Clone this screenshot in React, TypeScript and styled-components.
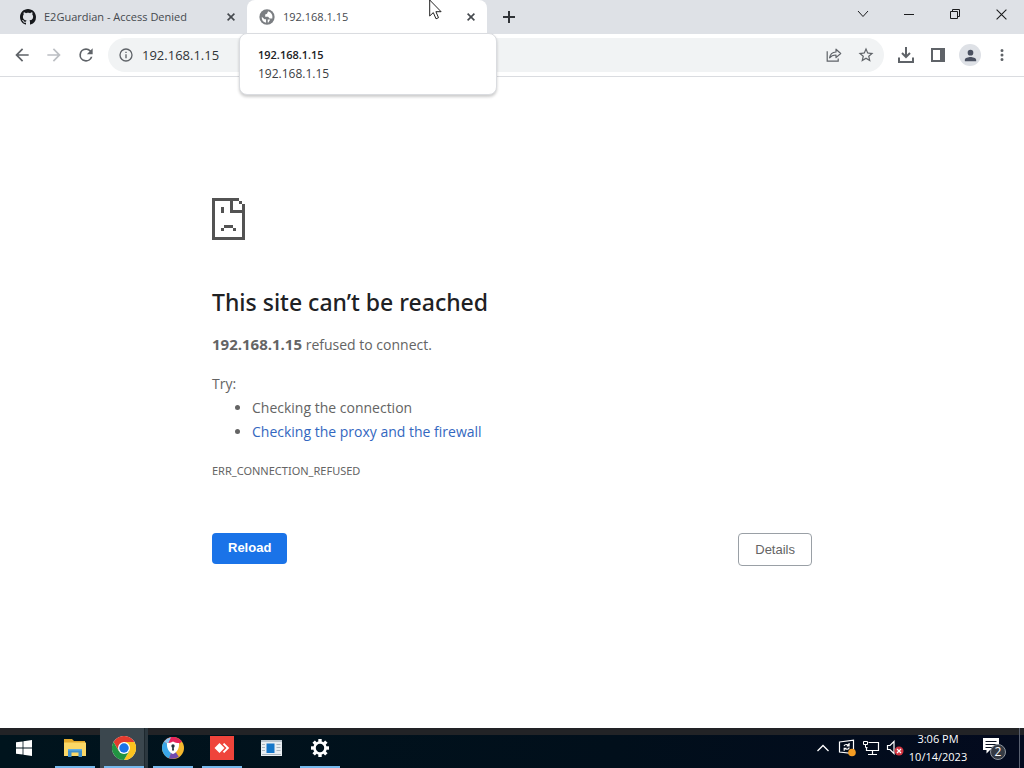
import React from 'react';
import styled, { createGlobalStyle } from 'styled-components';

const GlobalStyle = createGlobalStyle`
  * { box-sizing: border-box; }
  html, body, #root { height: 100%; }
  body {
    margin: 0;
    background: #fff;
    font-family: "Open Sans", "Noto Sans", sans-serif;
    color: #5f6368;
  }
  button, input { font: inherit; color: inherit; }
  svg { display: block; flex: none; }
`;

const Desktop = styled.div`
  display: flex;
  flex-direction: column;
  min-height: 100vh;
`;

/* ---------- tab strip ---------- */

const TabStrip = styled.header`
  display: flex;
  height: 34px;
  background: #dee1e6;
`;

const Tab = styled.div<{ $active?: boolean }>`
  position: relative;
  display: flex;
  align-items: center;
  width: ${p => (p.$active ? 240 : 247)}px;
  padding: 0 8px 0 ${p => (p.$active ? 12 : 20)}px;
  border-radius: 8px 8px 0 0;
  background: ${p => (p.$active ? '#fff' : 'transparent')};
`;

const TabLabel = styled.button`
  display: flex;
  flex: 1;
  align-items: center;
  gap: 8px;
  min-width: 0;
  padding: 0;
  border: 0;
  background: none;
  color: #45494e;
  font-size: 11px;
  line-height: 16px;
  white-space: nowrap;
`;

const IconButton = styled.button<{ $size?: number; $tone?: string }>`
  display: flex;
  flex: none;
  align-items: center;
  justify-content: center;
  width: ${p => p.$size ?? 32}px;
  height: ${p => p.$size ?? 32}px;
  padding: 0;
  border: 0;
  border-radius: 50%;
  background: none;
  color: ${p => p.$tone ?? '#5f6368'};
`;

const NewTab = styled.div`
  display: flex;
  align-items: center;
  padding-left: 8px;
`;

const WindowControls = styled.div`
  display: flex;
  margin-left: auto;
`;

const WindowButton = styled.button`
  display: flex;
  align-items: center;
  justify-content: center;
  width: 46px;
  height: 28px;
  padding: 0;
  border: 0;
  background: none;
  color: #1b1c1e;
`;

const HoverCard = styled.div`
  position: absolute;
  z-index: 2;
  top: 33px;
  left: -8px;
  width: 258px;
  padding: 12px 18px 10px;
  border: 1px solid #dadce0;
  border-radius: 8px;
  background: #fff;
  box-shadow: 0 2px 3px rgba(0, 0, 0, 0.2);
  color: #3c4043;
  font-size: 12px;
  line-height: 20px;
`;

const HoverTitle = styled.strong`
  display: block;
  color: #202124;
  font-size: 11px;
  font-weight: 600;
  line-height: 18px;
`;

const Cursor = styled.svg`
  position: absolute;
  z-index: 3;
  top: 0;
  left: 182px;
`;

/* ---------- toolbar ---------- */

const Toolbar = styled.nav`
  display: flex;
  align-items: center;
  height: 43px;
  padding: 0 6px;
  border-bottom: 1px solid #dadce0;
  background: #fff;
`;

const AddressBar = styled.label`
  display: flex;
  flex: 1;
  align-items: center;
  min-width: 0;
  height: 34px;
  margin: 0 6px;
  padding: 0 2px 0 10px;
  border-radius: 17px;
  background: #f1f3f4;
`;

const AddressInput = styled.input`
  flex: 1;
  min-width: 0;
  padding: 0 0 0 8px;
  border: 0;
  outline: 0;
  background: none;
  color: #303337;
  font-size: 13px;
  line-height: 20px;
`;

const Avatar = styled.span`
  display: flex;
  align-items: center;
  justify-content: center;
  width: 22px;
  height: 22px;
  border-radius: 50%;
  background: #dee1e6;
  color: #4a5060;
`;

/* ---------- error page ---------- */

const Page = styled.main`
  flex: 1;
  padding: 121px 24px 48px;
`;

const ErrorBox = styled.section`
  max-width: 600px;
  margin: 0 auto;
  font-size: 14px;
  line-height: 24px;
  color: #646464;
`;

const Title = styled.h1`
  margin: 46px 0 14px;
  color: #202124;
  font-family: "Noto Sans", sans-serif;
  font-size: 23px;
  font-weight: 500;
  line-height: 32px;
`;

const Paragraph = styled.p`
  margin: 0 0 15px;
`;

const Host = styled.strong`
  font-size: 15px;
`;

const Suggestions = styled.ul`
  margin: 0;
  padding-left: 40px;
`;

const Link = styled.a`
  color: #3367c0;
  text-decoration: none;
`;

const ErrorCode = styled.p`
  margin: 15px 0 0;
  font-family: "Noto Sans", sans-serif;
  font-size: 11px;
  line-height: 24px;
`;

const Actions = styled.div`
  display: flex;
  align-items: flex-start;
  justify-content: space-between;
  margin-top: 50px;
`;

const ActionButton = styled.button<{ $primary?: boolean }>`
  padding: ${p => (p.$primary ? '7px 16px 8px' : '8px 16px')};
  border: ${p => (p.$primary ? '0' : '1px solid #9aa0a6')};
  border-radius: 4px;
  background: ${p => (p.$primary ? '#1a73e8' : '#fff')};
  color: ${p => (p.$primary ? '#fff' : '#646464')};
  font-family: "Liberation Sans", sans-serif;
  font-size: 13px;
  font-weight: ${p => (p.$primary ? 700 : 400)};
  line-height: ${p => (p.$primary ? 16 : 15)}px;
`;

/* ---------- taskbar ---------- */

const Taskbar = styled.footer`
  display: flex;
  height: 40px;
  background: linear-gradient(#222326 0 7px, transparent 7px), linear-gradient(90deg, #00141d, #010f1b 60%, #030a1e);
  color: #fff;
`;

const TaskButton = styled.button<{ $start?: boolean; $active?: boolean; $open?: boolean }>`
  display: flex;
  align-items: center;
  justify-content: center;
  width: 48px;
  margin-right: ${p => (p.$start ? 3 : 1)}px;
  padding: 0;
  border: 0;
  background:
    ${p => (p.$open ? 'linear-gradient(#76b9ed, #76b9ed) center bottom / 40px 2px no-repeat' : 'none')},
    ${p => (p.$active ? 'linear-gradient(90deg, #3b474e 44px, #1d282e 44px 45px, #2c383f 45px)' : 'none')};
`;

const Tray = styled.div`
  display: flex;
  align-items: center;
  margin-left: auto;
`;

const TrayButton = styled.button<{ $wide?: boolean }>`
  display: flex;
  align-items: center;
  justify-content: center;
  width: ${p => (p.$wide ? 50 : 24)}px;
  height: 40px;
  padding: 0;
  border: 0;
  background: none;
  color: #fff;
`;

const Clock = styled.time`
  width: 62px;
  font-size: 11px;
  line-height: 18px;
  text-align: center;
  white-space: nowrap;
`;

const ShowDesktop = styled.div`
  width: 5px;
  height: 40px;
  border-left: 1px solid #596070;
`;

/* ---------- icons ---------- */

const CloseIcon = ({ size = 8, width = 1.6 }: { size?: number; width?: number }) => (
  <svg width={size} height={size} viewBox={`0 0 ${size} ${size}`} stroke="currentColor" strokeWidth={width}>
    <path d={`M.6 .6L${size - 0.6} ${size - 0.6}M${size - 0.6} .6L.6 ${size - 0.6}`} />
  </svg>
);

const GithubIcon = () => (
  <svg width="16" height="16" viewBox="0 0 16 16" fill="#16181c">
    <path d="M8 0C3.58 0 0 3.58 0 8c0 3.54 2.29 6.53 5.47 7.59.4.07.55-.17.55-.38 0-.19-.01-.82-.01-1.49-2.01.37-2.53-.49-2.69-.94-.09-.23-.48-.94-.82-1.13-.28-.15-.68-.52-.01-.53.63-.01 1.08.58 1.23.82.72 1.21 1.87.87 2.33.66.07-.52.28-.87.51-1.07-1.78-.2-3.64-.89-3.64-3.95 0-.87.31-1.59.82-2.15-.08-.2-.36-1.02.08-2.12 0 0 .67-.21 2.2.82.64-.18 1.32-.27 2-.27s1.36.09 2 .27c1.53-1.04 2.2-.82 2.2-.82.44 1.1.16 1.92.08 2.12.51.56.82 1.27.82 2.15 0 3.07-1.87 3.75-3.65 3.95.29.25.54.73.54 1.48 0 1.07-.01 1.93-.01 2.2 0 .21.15.46.55.38A8.01 8.01 0 0 0 16 8c0-4.42-3.58-8-8-8z" />
  </svg>
);

const GlobeIcon = () => (
  <svg width="16" height="16" viewBox="1 1 22 22">
    <circle cx="12" cy="12" r="10.5" fill="#7b7e82" />
    <path d="M4.8 11.5L8.5 15h2.2v4.8A8 8 0 0 1 4.8 11.5zM13.5 4.2L12 7.5 9.5 8.5v3h4l2 2.5h3.800a8 8 0 0 0-5.800-9.800zM13 15.5h3.500L14 19.500h-1z" fill="#fff" />
  </svg>
);

const MaterialIcon = ({ d, size = 20 }: { d: string; size?: number }) => (
  <svg width={size} height={size} viewBox="0 0 24 24" fill="currentColor"><path d={d} /></svg>
);

const BACK = 'M20 11H7.83l5.59-5.59L12 4l-8 8 8 8 1.41-1.41L7.83 13H20v-2z';
const FORWARD = 'M12 4l-1.41 1.41L16.17 11H4v2h12.17l-5.58 5.59L12 20l8-8z';
const RELOAD = 'M17.65 6.35A7.96 7.96 0 0 0 12 4a8 8 0 1 0 7.73 10h-2.08A6 6 0 1 1 12 6c1.66 0 3.14.69 4.22 1.78L13 11h7V4l-2.35 2.35z';
const INFO = 'M11 7h2v2h-2zm0 4h2v6h-2zm1-9a10 10 0 1 0 0 20 10 10 0 0 0 0-20zm0 18a8 8 0 1 1 0-16 8 8 0 0 1 0 16z';
const STAR = 'M22 9.24l-7.19-.62L12 2 9.19 8.63 2 9.24l5.46 4.73L5.82 21 12 17.27 18.18 21l-1.63-7.03L22 9.24zM12 15.4l-3.76 2.27 1-4.28-3.32-2.88 4.38-.38L12 6.1l1.71 4.04 4.38.38-3.32 2.88 1 4.28L12 15.4z';
const PERSON = 'M12 12a4 4 0 1 0 0-8 4 4 0 0 0 0 8zm0 2c-2.67 0-8 1.34-8 4v2h16v-2c0-2.66-5.33-4-8-4z';
const MORE = 'M12 8a2 2 0 1 0 0-4 2 2 0 0 0 0 4zm0 2a2 2 0 1 0 0 4 2 2 0 0 0 0-4zm0 6a2 2 0 1 0 0 4 2 2 0 0 0 0-4z';

const ShareIcon = () => (
  <svg width="16" height="14" viewBox="0 0 16 14" fill="none" stroke="currentColor" strokeWidth="1.2">
    <path d="M1.2 3.2v10h11v-2.8" />
    <path d="M3.6 9.8c.5-3.6 2.8-5.6 6.4-5.8V1.2l4.7 4.3L10 9.6V7c-3 0-5 .8-6.4 2.8z" strokeLinejoin="round" />
  </svg>
);

const DownloadIcon = () => (
  <svg width="16" height="16" viewBox="0 0 16 16" fill="none" stroke="currentColor" strokeWidth="2">
    <path d="M8 0v9.5M4 6l4 4 4-4M1 10.5V15h14v-4.5" />
  </svg>
);

const SidePanelIcon = () => (
  <svg width="14" height="14" viewBox="0 0 14 14" fill="currentColor">
    <path d="M0 0h14v14H0zM2 2v10h7V2z" fillRule="evenodd" />
  </svg>
);

const SadPage = () => (
  <svg width="33" height="42" viewBox="0 0 33 42" fill="#535353" shapeRendering="crispEdges" aria-hidden="true">
    <path d="M0 0h27v3H3v36h27V15H18V3h3v9h9V6h3v36H0z" />
    <path d="M27 3h3v3h-3zM9 9h3v6H9zM12 27h9v3h-9zM9 30h3v3H9zM21 30h3v3h-3z" />
  </svg>
);

const WindowsIcon = () => (
  <svg width="16" height="16" viewBox="0 0 16 16" fill="#fff">
    <path d="M0 2.3l6.6-.9v6.1H0zM7.4 1.3L16 0v7.5H7.4zM0 8.4h6.6v6.2L0 13.7zM7.4 8.4H16V16l-8.6-1.3z" />
  </svg>
);

const FolderIcon = () => (
  <svg width="22" height="18" viewBox="0 0 22 18">
    <path d="M0 0h8l2 2h11v4H0z" fill="#e3a92b" />
    <path d="M0 3.5h22V17H0z" fill="#fbd866" />
    <path d="M4 10h14v8h-3.5v-4.5h-7V18H4z" fill="#3f8fcb" />
    <path d="M4 10h14v1.5H4z" fill="#61aee2" />
  </svg>
);

const ChromeIcon = () => (
  <svg width="24" height="24" viewBox="0 0 48 48">
    <circle cx="24" cy="24" r="24" fill="#fff" />
    <path d="M24 12h20.8A24 24 0 0 0 3.2 12l10.4 18z" fill="#e33b2e" />
    <path d="M34.4 30L24 48a24 24 0 0 0 20.8-36H24z" fill="#fcc31e" />
    <path d="M13.6 30L3.2 12A24 24 0 0 0 24 48l10.4-18z" fill="#229342" />
    <circle cx="24" cy="24" r="12" fill="#fff" />
    <circle cx="24" cy="24" r="9.5" fill="#1a73e8" />
  </svg>
);

const ShieldBrowserIcon = () => (
  <svg width="22" height="22" viewBox="0 0 22 22">
    <circle cx="11" cy="11" r="11" fill="#f5b82e" />
    <path d="M11 11L2 4.6A11 11 0 0 1 20 4.6z" fill="#e6245b" />
    <path d="M11 11L2 4.6A11 11 0 0 0 7 21.2z" fill="#3aa6e8" />
    <path d="M11 11L7 21.2a11 11 0 0 0 9.8-1.4z" fill="#714baf" />
    <path d="M2 4.6A11 11 0 0 1 9 .2L6 7z" fill="#8ac9f3" />
    <path d="M11 4.5c2 1 3.700 1.500 6 1.500.4 5.500-1.500 9-6 11-4.500-2-6.400-5.500-6-11 2.300 0 4-.5 6-1.500z" fill="#fff" />
    <circle cx="11" cy="9" r="1.700" fill="#26333c" />
    <path d="M10.300 9h1.400l.3 4.500h-2z" fill="#26333c" />
  </svg>
);

const AnyDeskIcon = () => (
  <svg width="24" height="24" viewBox="0 0 24 24">
    <path d="M0 0h24v24H0z" fill="#ef443b" />
    <path d="M9.500 7l5 5-5 5-5-5z" fill="#fff" />
    <path d="M12.800 8.300L14.200 7l5 5-5 5-1.400-1.300L16.500 12z" fill="#fff" />
  </svg>
);

const NewsIcon = () => (
  <svg width="21" height="16" viewBox="0 0 21 16">
    <path d="M0 0h21v16H0z" fill="#e9eef2" />
    <path d="M0 0h21v2H0z" fill="#b9c4cd" />
    <path d="M5.500 3.500h8v9.500h-8z" fill="#1677c9" />
    <path d="M1 4.500h3M1 7.500h3M1 10.500h3M15.500 4.500h4M15.500 7.500h4M15.500 10.500h4M1 14.500h19" stroke="#aab5bd" />
  </svg>
);

const GearIcon = () => (
  <svg width="20" height="20" viewBox="-10 -10 20 20" fill="none" stroke="#fff">
    <circle r="5.500" strokeWidth="2.600" />
    {[0, 45, 90, 135, 180, 225, 270, 315].map(a => (
      <path key={a} d="M0 -6V-9" strokeWidth="3.400" transform={`rotate(${a})`} />
    ))}
  </svg>
);

const UpdateIcon = () => (
  <svg width="18" height="18" viewBox="0 0 18 18" fill="none" stroke="#fff" strokeWidth="1.200">
    <path d="M1.500 3l14-1.800v13.300L1.500 13z" />
    <path d="M6 7c1-1.800 3.500-2 4.800-.5M11.100 4v2.800H8.700M11.300 8.500c-.7 2-3.200 2.300-4.700.9M6.200 11.800V9.400h2.300" />
    <circle cx="14" cy="13.500" r="3.800" fill="#f39b22" stroke="none" />
  </svg>
);

const NetworkIcon = () => (
  <svg width="18" height="16" viewBox="0 0 18 16" fill="none" stroke="#fff">
    <path d="M6.500 2.500h10v8h-12V7.500M10.500 10.500v4M6 14.500h9" strokeWidth="1.200" />
    <path d="M1.500 1.500h4v3h-4zM3.500 4.500v3h2" />
  </svg>
);

const MutedIcon = () => (
  <svg width="18" height="16" viewBox="0 0 18 16">
    <path d="M1.500 5.500h2.500l4-4v12l-4-4H1.500z" fill="none" stroke="#fff" strokeWidth="1.200" />
    <circle cx="13" cy="11" r="4.500" fill="#d13440" />
    <path d="M11 9l4 4M15 9l-4 4" stroke="#fff" strokeWidth="1.200" />
  </svg>
);

const NotificationIcon = () => (
  <svg width="26" height="24" viewBox="0 0 26 24">
    <path d="M2 2h16v12H9l-3.500 3.500V14H2z" fill="#fff" />
    <path d="M4.500 5.500h11M4.500 8.500h11M4.500 11.500h7" stroke="#0a1322" />
    <circle cx="17" cy="16" r="7.500" fill="#343a43" stroke="#8e959e" />
    <text x="17" y="20" fill="#fff" fontSize="12" textAnchor="middle">2</text>
  </svg>
);

export default function App() {
  return (
    <Desktop>
      <GlobalStyle />
      <TabStrip>
        <Tab>
          <TabLabel><GithubIcon />E2Guardian - Access Denied</TabLabel>
          <IconButton $size={16} $tone="#45494e" aria-label="Close tab"><CloseIcon /></IconButton>
        </Tab>
        <Tab $active>
          <TabLabel><GlobeIcon />192.168.1.15</TabLabel>
          <IconButton $size={16} $tone="#45494e" aria-label="Close tab"><CloseIcon /></IconButton>
          <HoverCard role="tooltip">
            <HoverTitle>192.168.1.15</HoverTitle>
            192.168.1.15
          </HoverCard>
          <Cursor width="13" height="20" viewBox="0 0 13 20" aria-hidden="true">
            <path d="M.7 0v16l3.600-3.400L7 18.800l2.500-1.100L6.900 11.700h5.200z" fill="#fff" stroke="#222" />
          </Cursor>
        </Tab>
        <NewTab>
          <IconButton $size={28} $tone="#303337" aria-label="New tab">
            <svg width="12" height="12" viewBox="0 0 12 12" stroke="currentColor" strokeWidth="2"><path d="M6 0v12M0 6h12" /></svg>
          </IconButton>
        </NewTab>
        <WindowControls>
          <WindowButton aria-label="Search tabs">
            <svg width="12" height="12" viewBox="0 0 12 12" fill="none" stroke="currentColor"><path d="M1 3l5 5.500L11 3" /></svg>
          </WindowButton>
          <WindowButton aria-label="Minimize">
            <svg width="10" height="10" viewBox="0 0 10 10" stroke="currentColor"><path d="M0 5.500h10" /></svg>
          </WindowButton>
          <WindowButton aria-label="Restore">
            <svg width="10" height="10" viewBox="0 0 10 10" fill="none" stroke="currentColor"><path d="M.5 2.500h7v7h-7zM2.500 2.500v-2h7v7h-2" /></svg>
          </WindowButton>
          <WindowButton aria-label="Close"><CloseIcon size={11} width={1.1} /></WindowButton>
        </WindowControls>
      </TabStrip>

      <Toolbar>
        <IconButton aria-label="Back"><MaterialIcon d={BACK} /></IconButton>
        <IconButton $tone="#bcbfc3" aria-label="Forward"><MaterialIcon d={FORWARD} /></IconButton>
        <IconButton aria-label="Reload page"><MaterialIcon d={RELOAD} /></IconButton>
        <AddressBar>
          <MaterialIcon d={INFO} size={16} />
          <AddressInput aria-label="Address" defaultValue="192.168.1.15" />
          <IconButton aria-label="Share"><ShareIcon /></IconButton>
          <IconButton aria-label="Bookmark"><MaterialIcon d={STAR} size={18} /></IconButton>
        </AddressBar>
        <IconButton aria-label="Downloads"><DownloadIcon /></IconButton>
        <IconButton aria-label="Side panel"><SidePanelIcon /></IconButton>
        <IconButton aria-label="Profile"><Avatar><MaterialIcon d={PERSON} size={17} /></Avatar></IconButton>
        <IconButton aria-label="Menu"><MaterialIcon d={MORE} size={18} /></IconButton>
      </Toolbar>

      <Page>
        <ErrorBox>
          <SadPage />
          <Title>This site can’t be reached</Title>
          <Paragraph><Host>192.168.1.15</Host> refused to connect.</Paragraph>
          <div>Try:</div>
          <Suggestions>
            <li>Checking the connection</li>
            <li><Link href="#proxy">Checking the proxy and the firewall</Link></li>
          </Suggestions>
          <ErrorCode>ERR_CONNECTION_REFUSED</ErrorCode>
          <Actions>
            <ActionButton $primary>Reload</ActionButton>
            <ActionButton>Details</ActionButton>
          </Actions>
        </ErrorBox>
      </Page>

      <Taskbar>
        <TaskButton $start aria-label="Start"><WindowsIcon /></TaskButton>
        <TaskButton $open aria-label="File Explorer"><FolderIcon /></TaskButton>
        <TaskButton $open $active aria-label="Chrome"><ChromeIcon /></TaskButton>
        <TaskButton $open aria-label="Private browser"><ShieldBrowserIcon /></TaskButton>
        <TaskButton $open aria-label="AnyDesk"><AnyDeskIcon /></TaskButton>
        <TaskButton aria-label="News"><NewsIcon /></TaskButton>
        <TaskButton $open aria-label="Settings"><GearIcon /></TaskButton>
        <Tray>
          <TrayButton aria-label="Show hidden icons">
            <svg width="14" height="8" viewBox="0 0 14 8" fill="none" stroke="#fff" strokeWidth="1.300"><path d="M1.500 7L7 1.500 12.500 7" /></svg>
          </TrayButton>
          <TrayButton aria-label="Updates"><UpdateIcon /></TrayButton>
          <TrayButton aria-label="Network"><NetworkIcon /></TrayButton>
          <TrayButton aria-label="Volume"><MutedIcon /></TrayButton>
          <Clock dateTime="2023-10-14T15:06">3:06 PM<br />10/14/2023</Clock>
          <TrayButton $wide aria-label="Notifications"><NotificationIcon /></TrayButton>
          <ShowDesktop />
        </Tray>
      </Taskbar>
    </Desktop>
  );
}
